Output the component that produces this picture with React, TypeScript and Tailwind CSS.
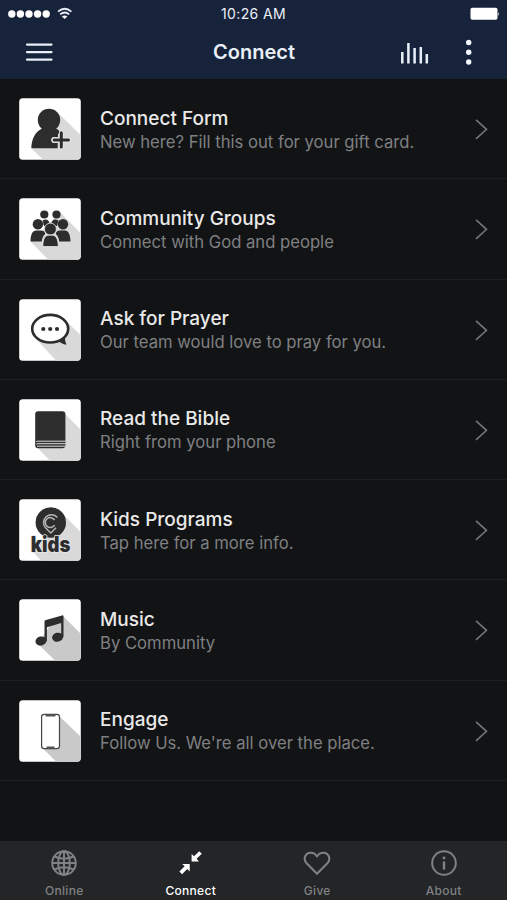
import type { ReactNode } from "react";

const ink = "#2d2d2e";

const personIcon = (
  <>
    <path d="M38 14L61.5 37V58.5Q61.5 61.5 58.5 61.5H24L13 51Z" fill="#d9d9d9" />
    <circle cx="30" cy="22" r="11.2" fill={ink} />
    <path d="M12.3 50.3C12.7 41 16 34 23 30.5H37C39.5 31.8 40.5 33 41 34.5L39 36V39H34.5C31.5 39 31.5 45 34.5 45H38.7V50.3Z" fill={ink} />
    <path d="M42.3 34.5V49.3M34.8 42H50" stroke="#e6e6e6" strokeWidth="4.8" strokeLinecap="round" />
    <path d="M42.3 34.8V49M35.2 42H49.5" stroke={ink} strokeWidth="3" strokeLinecap="round" />
  </>
);

const groupIcon = (
  <>
    <path d="M41 14L61.5 35V58.5Q61.5 61.5 58.5 61.5H29L12 44Z" fill="#d9d9d9" />
    <g fill={ink}>
      <circle cx="25.3" cy="16.5" r="4.1" />
      <circle cx="37.5" cy="16.5" r="4.1" />
      <path d="M23.5 22.5Q29 19.5 30.5 25L26.5 28L25 28ZM39.5 22.5Q34 19.5 32.5 25L36.5 28H38Z" />
      <circle cx="18.9" cy="26.3" r="5.2" />
      <circle cx="44" cy="26.3" r="5.2" />
      <path d="M11.5 43.5C11.5 36 13.8 32.7 17 32.5H22.5C25 32.8 26 34 26.2 36C24 38 23 40.5 22.8 43.5ZM51.5 43.5C51.5 36 49 32.7 46 32.5H40.5C38 32.8 37 34 36.8 36C39 38 40 40.5 40.2 43.5Z" />
    </g>
    <g fill={ink} stroke="#eee" strokeWidth="0.8">
      <circle cx="31.4" cy="31.1" r="6" />
      <path d="M23.8 48.6C23.8 41 26 37.4 29.3 37.2H33.7C37 37.4 39.3 41 39.3 48.6Z" />
    </g>
  </>
);

const chatIcon = (
  <>
    <path d="M48 23L61.5 36V58.5Q61.5 61.5 58.5 61.5H37L17 40Z" fill="#d9d9d9" />
    <ellipse cx="31.2" cy="29.7" rx="18" ry="13.8" fill="#fff" stroke={ink} strokeWidth="2.6" />
    <path d="M39 41.5Q42 45 47.5 45.8Q45.8 42 45.8 37.5Z" fill={ink} />
    <circle cx="24.3" cy="30" r="2.1" fill={ink} />
    <circle cx="31.2" cy="30" r="2.1" fill={ink} />
    <circle cx="38" cy="30" r="2.1" fill={ink} />
  </>
);

const bookIcon = (
  <>
    <path d="M45 14L61.5 30.5V58.5Q61.5 61.5 58.5 61.5H31L17.5 48Z" fill="#d9d9d9" />
    <rect x="16.2" y="12.3" width="30.2" height="37" rx="3" fill={ink} />
    <path d="M17 43Q17.5 42.2 19 42.2H46.5M17.3 45.2Q18 44.7 19 44.7H46.5M18 47.2H46.5" stroke="#ddd" strokeWidth="1" fill="none" />
  </>
);

const kidsIcon = (
  <>
    <path d="M45 16L61.5 33V58.5Q61.5 61.5 58.5 61.5H22L14 53Z" fill="#d9d9d9" />
    <circle cx="31.8" cy="23.5" r="15.2" fill={ink} />
    <path d="M38.3 18.4A7.8 7.8 0 1 0 26.5 28.8L31.8 34L37 28.8M35.6 21A5 5 0 1 0 35.6 26.2" fill="none" stroke="#b5b5b5" strokeWidth="1.5" strokeLinejoin="round" />
    <text x="11.8" y="53" textLength="39.5" lengthAdjust="spacingAndGlyphs" fontSize="21.5" fontWeight="900" fontFamily="Inter, sans-serif" fill={ink} stroke="#e8e8e8" strokeWidth="1.6" strokeLinejoin="round" paintOrder="stroke">kids</text>
  </>
);

const musicIcon = (
  <>
    <path d="M44 17L61.5 34.5V58.5Q61.5 61.5 58.5 61.5H36L19 45L30 28Z" fill="#c9c9c9" />
    <g fill={ink}>
      <ellipse cx="22" cy="42" rx="5.6" ry="4.5" transform="rotate(-12 22 42)" />
      <ellipse cx="38.6" cy="38.2" rx="5.6" ry="4.5" transform="rotate(-12 38.6 38.2)" />
      <path d="M25.5 22.5Q25.5 21.3 27 21L43 16.4Q44.5 16.1 44.5 17.5V38H42.2V24L27.9 28.2V42H25.5Z" />
    </g>
  </>
);

const phoneIcon = (
  <>
    <path d="M39 15L61.5 36.5V58.5Q61.5 61.5 58.5 61.5H37L23.5 48Z" fill="#c9c9c9" />
    <rect x="22.6" y="14.3" width="17.9" height="34.3" rx="2.7" fill="#fff" stroke="#444" strokeWidth="1.2" />
    <path d="M26.5 15.5H36.5M27.5 47.4H35.5" stroke="#555" strokeWidth="2" />
  </>
);

const items: { title: string; sub: string; icon: ReactNode }[] = [
  { title: "Connect Form", sub: "New here? Fill this out for your gift card.", icon: personIcon },
  { title: "Community Groups", sub: "Connect with God and people", icon: groupIcon },
  { title: "Ask for Prayer", sub: "Our team would love to pray for you.", icon: chatIcon },
  { title: "Read the Bible", sub: "Right from your phone", icon: bookIcon },
  { title: "Kids Programs", sub: "Tap here for a more info.", icon: kidsIcon },
  { title: "Music", sub: "By Community", icon: musicIcon },
  { title: "Engage", sub: "Follow Us. We're all over the place.", icon: phoneIcon },
];

const tabs: { label: string; active?: boolean; icon: ReactNode }[] = [
  {
    label: "Online",
    icon: (
      <g stroke="currentColor" strokeWidth="2">
        <circle cx="14" cy="14" r="11.8" />
        <ellipse cx="14" cy="14" rx="5.8" ry="11.8" />
        <path d="M14 2V26M2 14H26M4.5 7.5Q14 12 23.5 7.5M4.5 20.5Q14 16 23.5 20.5" />
      </g>
    ),
  },
  {
    label: "Connect",
    active: true,
    icon: (
      <g fill="currentColor">
        <path d="M14.6 5L17 7.2L22.2 2.2L24.8 4.8L19.6 9.8L22 12.5H14.6Z" />
        <path d="M12.7 15V22.4L10.3 20L5 25.2L2.4 22.6L7.7 17.3L5.2 15Z" />
      </g>
    ),
  },
  {
    label: "Give",
    icon: <path d="M14 24.8L3.9 14.6C-0.6 9.8 2.5 3.7 7.7 3.7C10.8 3.7 12.7 5.3 14 7.5C15.3 5.3 17.2 3.7 20.3 3.7C25.5 3.7 28.6 9.8 24.1 14.6Z" stroke="currentColor" strokeWidth="2.1" strokeLinejoin="round" />,
  },
  {
    label: "About",
    icon: (
      <>
        <circle cx="14" cy="14" r="11.8" stroke="currentColor" strokeWidth="2" />
        <path d="M14 13.5V19.5" stroke="currentColor" strokeWidth="2.4" strokeLinecap="round" />
        <circle cx="14" cy="9" r="1.4" fill="currentColor" />
      </>
    ),
  },
];

export default function App() {
  return (
    <div className="flex h-[900px] w-[507px] flex-col overflow-hidden bg-[#121315] font-['Inter',sans-serif] text-[#e9e9e9]">
      <header className="h-[79px] shrink-0 bg-[#17233a] text-[#e9eff8]">
        <div className="grid h-[27px] grid-cols-3 items-center pr-[7px] pl-2">
          <div className="flex items-center">
            <svg width="64" height="14" viewBox="0 0 64 14" fill="none">
              <g fill="#fff">
                <circle cx="3.8" cy="7" r="3.7" />
                <circle cx="12.4" cy="7" r="3.7" />
                <circle cx="21" cy="7" r="3.7" />
                <circle cx="29.6" cy="7" r="3.7" />
                <circle cx="38.2" cy="7" r="3.7" />
                <path d="M56.6 12L53.8 9.4Q56.6 7.4 59.4 9.4Z" />
              </g>
              <path d="M50 4.7Q56.7 -1.2 63.4 4.7M52.2 7.4Q56.7 3.6 61.2 7.4" stroke="#e9eff8" strokeWidth="1.7" />
            </svg>
          </div>
          <div className="pr-px text-center text-[14px] leading-[18px] whitespace-nowrap tracking-[0.4px]">10:26 AM</div>
          <svg className="justify-self-end" width="30" height="14" viewBox="0 0 30 14">
            <rect x="0.5" y="0.8" width="27" height="12" rx="1.8" fill="#fff" />
            <path d="M28.3 5Q30 7 28.3 9Z" fill="#fff" />
          </svg>
        </div>
        <div className="grid h-[52px] grid-cols-[120px_1fr_120px] items-start">
          <svg className="mt-[14px] ml-[25px]" width="28" height="22" viewBox="0 0 28 22">
            <path d="M2 3.6H26.5M2 11.1H26.5M2 18.6H26.5" stroke="#e9eff8" strokeWidth="2.3" strokeLinecap="round" />
          </svg>
          <h1 className="mt-[11px] pl-px text-center text-[20px] leading-7 font-semibold">Connect</h1>
          <div className="flex gap-[35px] pt-[11px] pl-[13px]">
            <svg width="30" height="28" viewBox="0 0 30 28">
              <path d="M2.3 14V25.5M8.4 5V25.5M14.6 10V25.5M20.8 9V25.5M26.8 16V25.5" stroke="#e9eff8" strokeWidth="2.5" />
            </svg>
            <svg width="8" height="28" viewBox="0 0 8 28" fill="#f5f8fd">
              <circle cx="3.7" cy="4.5" r="2.7" />
              <circle cx="3.7" cy="14.2" r="2.7" />
              <circle cx="3.7" cy="24" r="2.7" />
            </svg>
          </div>
        </div>
      </header>
      <main className="flex-1">
        {items.map((item) => (
          <div key={item.title} className="flex h-[100.25px] items-center border-b-[1.5px] border-[#1e1f21] pt-px pr-[18px] pl-[18.5px]">
            <svg className="shrink-0" width="62" height="62" viewBox="0 0 62 62" fill="none">
              <rect x="0.2" y="0.2" width="61.6" height="61.6" rx="3.5" fill="#fff" />
              {item.icon}
            </svg>
            <div className="mt-[2px] ml-[19.5px] flex-1 whitespace-nowrap">
              <div className="text-[19px] leading-6 font-medium">{item.title}</div>
              <div className="text-[16.65px] leading-[23px] text-[#7f8082]">{item.sub}</div>
            </div>
            <svg width="14" height="22" viewBox="0 0 14 22" fill="none">
              <path d="M1 1.8L11.5 11.3L1 20.8" stroke="#747577" strokeWidth="1.6" />
            </svg>
          </div>
        ))}
      </main>
      <nav className="grid h-[59px] shrink-0 grid-cols-4 bg-[#242527] pl-px">
        {tabs.map((tab) => (
          <div key={tab.label} className={tab.active ? "flex flex-col items-center pt-2 text-white" : "flex flex-col items-center pt-2 text-[#808183]"}>
            <svg width="28" height="28" viewBox="0 0 28 28" fill="none">{tab.icon}</svg>
            <span className="mt-[6px] text-[12px] leading-4 font-medium tracking-[0.3px]">{tab.label}</span>
          </div>
        ))}
      </nav>
    </div>
  );
}
